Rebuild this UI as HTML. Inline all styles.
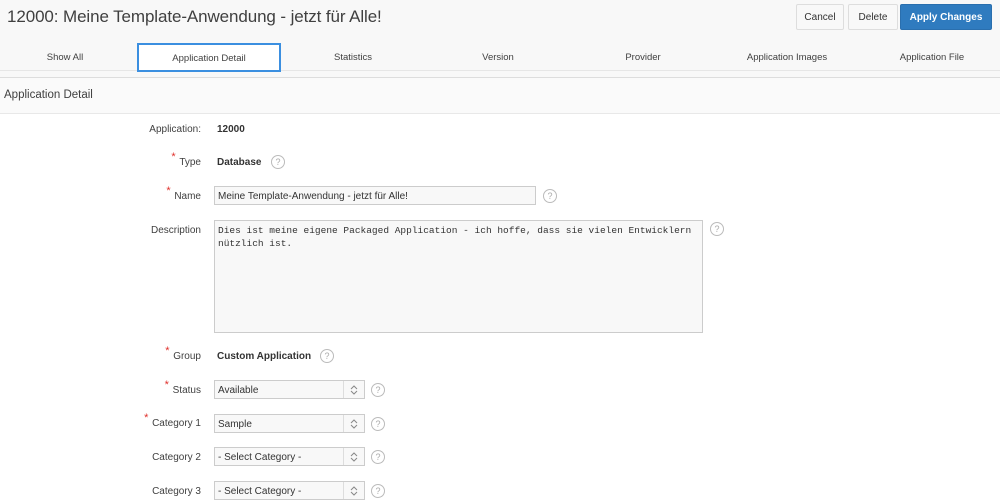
<!DOCTYPE html>
<html><head><style>
body{margin:0;width:1000px;height:496px;overflow:hidden;background:#fff;font-family:"Liberation Sans",sans-serif;font-size:11px;color:#404040;position:relative}
.top{position:absolute;left:0;top:0;width:1000px;height:77px;background:#f8f8f8}
.title{position:absolute;left:7px;top:7px;font-size:17px;color:#404040;letter-spacing:-0.1px}
.btn{position:absolute;top:4px;height:24px;line-height:25px;border:1px solid #ddd;background:#f8f8f8;border-radius:2px;font-size:10px;color:#333;text-align:center}
.tab{position:absolute;top:44px;height:26px;line-height:28px;text-align:center;font-size:9.5px;color:#404040}
.l{position:absolute;top:70px;left:0;width:1000px;height:1px;background:#e6e6e6}
.rh{position:absolute;left:0;top:77px;width:1000px;height:35px;border-top:1px solid #ddd;border-bottom:1px solid #e8e8e8;background:#fafafa}
.lab{position:absolute;right:799px;font-size:10px;color:#404040;text-align:right}
.req:before{content:"*";color:#e0302b;position:absolute;left:-8px;top:-6px;font-size:11px}
.val{position:absolute;left:217px;font-weight:bold;font-size:10px;color:#333}
.in{position:absolute;left:214px;height:19px;border:1px solid #ccc;background:#f8f8f8;box-sizing:border-box;font-size:10px;line-height:19px;padding-left:3px;color:#333}
.sel:after{content:"";position:absolute;right:0;top:0;width:20px;height:17px;border-left:1px solid #ddd}
.arr{position:absolute;right:5px;top:3px;width:10px;height:12px}
.h{position:absolute;width:12px;height:12px;border:1px solid #bbb;border-radius:50%;font-size:9px;line-height:12px;text-align:center;color:#aaa}
</style></head><body>
<div class="top"></div>
<div class="title">12000: Meine Template-Anwendung - jetzt für Alle!</div>
<div class="btn" style="left:796px;width:46px">Cancel</div>
<div class="btn" style="left:848px;width:48px">Delete</div>
<div class="btn" style="left:900px;width:90px;background:#2f7bbf;border-color:#2a6fae;color:#fff;font-weight:bold">Apply Changes</div>
<div class="l"></div>
<div class="tab" style="left:0;width:130px">Show All</div>
<div class="tab" style="left:137px;width:140px;top:43px;height:25px;border:2px solid #3b8fe0;background:#fff;line-height:28px">Application Detail</div>
<div class="tab" style="left:283px;width:140px">Statistics</div>
<div class="tab" style="left:428px;width:140px">Version</div>
<div class="tab" style="left:573px;width:140px">Provider</div>
<div class="tab" style="left:717px;width:140px">Application Images</div>
<div class="tab" style="left:862px;width:140px">Application File</div>
<div class="rh"><div style="position:absolute;left:4px;top:11px;font-size:11.5px;color:#404040">Application Detail</div></div>

<div class="lab" style="top:124px">Application:</div><div class="val" style="top:124px">12000</div>
<div class="lab req" style="top:157px">Type</div><div class="val" style="top:157px">Database</div><div class="h" style="left:271px;top:155px">?</div>
<div class="lab req" style="top:191px">Name</div><div class="in" style="top:186px;width:322px">Meine Template-Anwendung - jetzt für Alle!</div><div class="h" style="left:543px;top:189px">?</div>
<div class="lab" style="top:225px">Description</div><div class="in" style="top:220px;width:489px;height:113px;font-family:'Liberation Mono',monospace;font-size:9.5px;line-height:13px;padding-top:3px">Dies ist meine eigene Packaged Application - ich hoffe, dass sie vielen Entwicklern<br>nützlich ist.</div><div class="h" style="left:710px;top:222px">?</div>
<div class="lab req" style="top:351px">Group</div><div class="val" style="top:351px">Custom Application</div><div class="h" style="left:320px;top:349px">?</div>
<div class="lab req" style="top:385px">Status</div><div class="in sel" style="top:380px;width:151px">Available<svg class="arr" viewBox="0 0 10 12"><path d="M2 5L5 2L8 5M2 7L5 10L8 7" fill="none" stroke="#888" stroke-width="1"/></svg></div><div class="h" style="left:371px;top:383px">?</div>
<div class="lab req" style="top:418px">Category 1</div><div class="in sel" style="top:414px;width:151px">Sample<svg class="arr" viewBox="0 0 10 12"><path d="M2 5L5 2L8 5M2 7L5 10L8 7" fill="none" stroke="#888" stroke-width="1"/></svg></div><div class="h" style="left:371px;top:417px">?</div>
<div class="lab" style="top:452px">Category 2</div><div class="in sel" style="top:447px;width:151px">- Select Category -<svg class="arr" viewBox="0 0 10 12"><path d="M2 5L5 2L8 5M2 7L5 10L8 7" fill="none" stroke="#888" stroke-width="1"/></svg></div><div class="h" style="left:371px;top:450px">?</div>
<div class="lab" style="top:486px">Category 3</div><div class="in sel" style="top:481px;width:151px">- Select Category -<svg class="arr" viewBox="0 0 10 12"><path d="M2 5L5 2L8 5M2 7L5 10L8 7" fill="none" stroke="#888" stroke-width="1"/></svg></div><div class="h" style="left:371px;top:484px">?</div>
</body></html>
